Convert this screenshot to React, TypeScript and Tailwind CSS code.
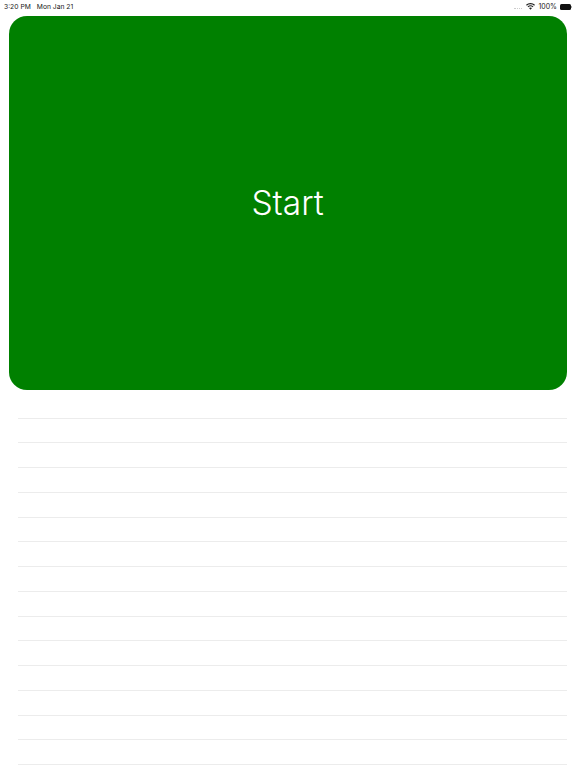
import React from 'react';

const rows = Array.from({ length: 15 }, (_, i) => i);

const StatusBar: React.FC = () => {
  return (
    <div className="flex h-4 items-start justify-between pl-1 pr-[4px] pt-[2.5px] text-[6.75px] leading-[8px] text-[#222]">
      <div className="flex gap-[6px]">
        <span>3:20 PM</span>
        <span>Mon Jan 21</span>
      </div>
      <div className="flex items-center">
        {/* signal dots */}
        <div className="mr-[4px] mt-[4px] flex items-end gap-px">
          {[0, 1, 2, 3].map((d) => (
            <div key={d} className="h-px w-[1.25px] bg-[#ccc]"></div>
          ))}
        </div>
        <svg width="9" height="7" viewBox="0 0 18 13" className="mr-[3px]">
          <path d="M9 13 L6 9.6 A4.6 4.6 0 0 1 12 9.6 Z" fill="#222" />
          <path d="M4.6 8.2 L3.1 6.5 A8.9 8.9 0 0 1 14.9 6.5 L13.4 8.2 A6.6 6.6 0 0 0 4.6 8.2 Z" fill="#222" />
          <path d="M1.7 5 L0 3.2 A13 13 0 0 1 18 3.2 L16.3 5 A10.6 10.6 0 0 0 1.7 5 Z" fill="#222" />
        </svg>
        <span className="mr-[3px] text-[7px]">100%</span>
        <div className="flex items-center">
          <div className="h-[6px] w-[11px] rounded-[1.5px] bg-[#111]"></div>
          <div className="h-[2px] w-px rounded-r-sm bg-[#888]"></div>
        </div>
      </div>
    </div>
  );
};

export default function App() {
  return (
    <div className="h-[768px] w-[576px] overflow-hidden bg-white font-['Inter','Liberation_Sans',sans-serif]">
      <StatusBar />

      <div className="ml-[9.25px] mr-[9px] flex h-[374px] items-center justify-center rounded-[18px] bg-[#008000]">
        <span className="translate-y-px pr-[1px] text-[33.5px] font-[350] leading-none text-white">Start</span>
      </div>

      {/* empty table rows */}
      <div className="mt-[3.75px] pl-[18px] pr-[9.5px]">
        {rows.map((r) => (
          <div key={r} className="h-[24.75px] border-b border-[#ececec]"></div>
        ))}
      </div>
    </div>
  );
}
